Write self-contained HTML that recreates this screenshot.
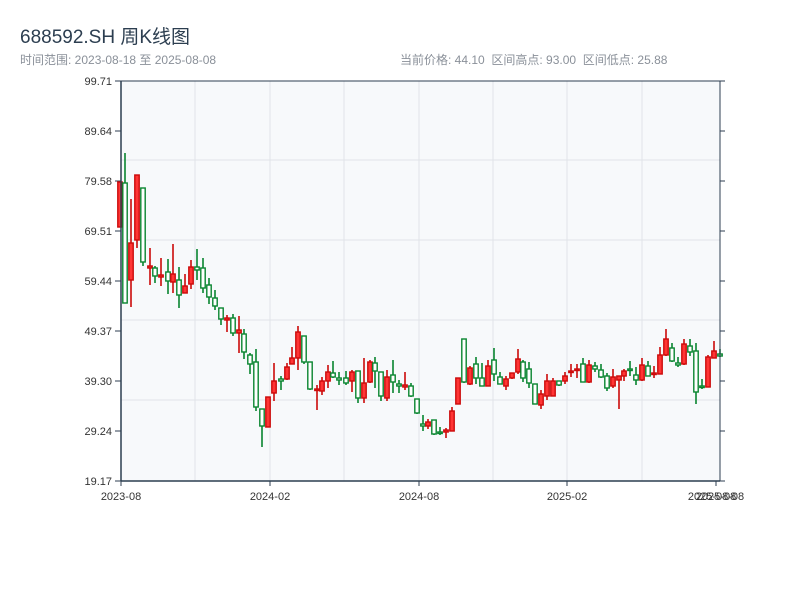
<!DOCTYPE html>
<html><head><meta charset="utf-8"><style>
body{margin:0;background:#fff;width:800px;height:600px;overflow:hidden;font-family:"Liberation Sans","Noto Sans CJK SC",sans-serif}
.t{position:absolute;left:20px;top:22px;font-size:19px;color:#2c3e50}
.s{position:absolute;top:51px;font-size:12px;color:#8a9099}
svg{position:absolute;left:0;top:0}
</style></head><body>
<div class="t">688592.SH 周K线图</div>
<div class="s" style="left:20px">时间范围: 2023-08-18 至 2025-08-08</div>
<div class="s" style="left:400px">当前价格: 44.10&nbsp;&nbsp;区间高点: 93.00&nbsp;&nbsp;区间低点: 25.88</div>
<svg id="c" width="800" height="600" xmlns="http://www.w3.org/2000/svg" font-family="Liberation Sans, sans-serif" font-size="11" fill="#333"></svg>
<script>
var s='';
s+='<rect x="121" y="81" width="599" height="400" fill="#f7f9fb"/>';
[195,270,344,419,493,567,642].forEach(function(x){s+='<line x1="'+x+'" y1="81" x2="'+x+'" y2="481" stroke="#e1e4e8"/>';});
[160,240,320,400].forEach(function(y){s+='<line x1="121" y1="'+y+'" x2="720" y2="'+y+'" stroke="#e1e4e8"/>';});
var L=['99.71','89.64','79.58','69.51','59.44','49.37','39.30','29.24','19.17'];
L.forEach(function(l,i){var y=81+i*50;s+='<line x1="115" y1="'+y+'" x2="121" y2="'+y+'" stroke="#2c3e50"/><line x1="720" y1="'+y+'" x2="725" y2="'+y+'" stroke="#2c3e50"/><text x="112" y="'+(y+4)+'" text-anchor="end">'+l+'</text>';});
[[121,'2023-08'],[270,'2024-02'],[419,'2024-08'],[567,'2025-02'],[716,'2025-08'],[716,'2025-08-08']].forEach(function(a){s+='<line x1="'+a[0]+'" y1="481" x2="'+a[0]+'" y2="486" stroke="#2c3e50"/><text x="'+a[0]+'" y="500" text-anchor="middle">'+a[1]+'</text>';});
var D=[[120,182,227,182,227,1],[125,183,303,153,303,0],[131,243,280,199,307,1],[137,175,240,175,248,1],[143,188,262,188,266,0],[150,266,268,248,285,1],[155,268,276,266,283,0],[161,275,277,258,286,1],[168,272,281,259,294,0],[173,274,282,244,293,1],[179,280,295,267,308,0],[185,286,293,274,293,1],[191,267,284,260,289,1],[197,267,270,249,280,0],[203,268,288,258,293,0],[209,285,297,278,304,0],[215,298,306,290,310,0],[221,308,319,308,325,0],[227,318,320,315,332,1],[233,318,333,314,336,0],[239,330,333,316,353,1],[244,334,352,329,359,0],[250,355,364,353,374,0],[256,362,407,349,411,0],[262,409,426,409,447,0],[268,397,427,397,427,1],[274,381,393,363,401,1],[281,379,381,376,390,0],[287,367,379,363,380,1],[292,358,364,347,364,1],[298,332,358,326,370,1],[304,336,362,336,364,0],[310,362,389,362,390,0],[317,389,390,385,410,1],[322,381,391,377,395,1],[328,372,381,365,388,1],[333,373,377,361,378,0],[339,378,380,372,385,0],[346,378,383,371,385,0],[352,372,381,370,392,1],[358,371,398,371,403,0],[364,383,398,358,403,1],[370,362,382,360,383,1],[375,363,371,357,388,0],[381,372,396,372,401,0],[387,377,398,370,401,1],[393,375,382,360,393,0],[399,384,386,380,393,0],[405,385,387,372,390,1],[411,386,396,383,397,0],[417,399,413,399,414,0],[423,424,426,415,431,0],[428,422,426,419,429,1],[434,420,434,420,435,0],[440,432,433,427,435,0],[446,430,432,428,438,1],[452,411,431,407,431,1],[458,378,404,378,404,1],[464,339,382,339,383,0],[470,368,384,366,385,1],[476,364,378,357,384,0],[482,378,386,363,386,0],[488,366,386,360,386,1],[494,360,374,348,381,0],[500,377,384,372,384,0],[506,379,386,376,390,1],[512,373,378,373,379,1],[518,359,372,349,374,1],[523,362,378,360,382,0],[529,369,383,362,388,0],[535,384,404,384,404,0],[541,394,405,390,409,1],[547,381,396,374,400,1],[553,381,396,378,396,1],[559,381,385,381,386,0],[565,376,381,372,384,1],[571,371,372,364,377,1],[577,369,370,364,378,1],[583,364,382,358,382,0],[589,365,382,360,383,1],[595,366,369,362,372,0],[601,370,377,364,378,0],[607,376,388,373,391,0],[613,377,386,369,388,1],[619,376,380,376,409,1],[624,371,376,369,381,1],[630,369,370,361,376,0],[636,375,380,367,385,0],[642,365,380,358,381,1],[648,366,376,361,376,0],[654,373,374,366,378,1],[660,355,374,347,374,1],[666,339,355,329,356,1],[672,348,361,343,362,0],[678,363,365,357,367,0],[684,344,364,339,365,1],[690,346,352,339,356,0],[696,351,392,343,404,0],[702,386,387,379,389,0],[708,357,387,355,387,1],[714,351,358,341,358,1],[720,354,356,349,357,0]];
D.forEach(function(d){var c=d[5]?'#cc0a0a':'#08852f',f=d[5]?'#ff3535':'#fff';
s+='<line x1="'+d[0]+'" y1="'+d[3]+'" x2="'+d[0]+'" y2="'+d[4]+'" stroke="'+c+'" stroke-width="1.6"/>';
s+='<rect x="'+(d[0]-2.2)+'" y="'+d[1]+'" width="4.4" height="'+Math.max(1.5,d[2]-d[1])+'" fill="'+f+'" stroke="'+c+'" stroke-width="1.4"/>';});
s+='<line x1="121" y1="81" x2="720" y2="81" stroke="#2c3e50"/><line x1="121" y1="81" x2="121" y2="481" stroke="#2c3e50" stroke-width="1.5"/><line x1="720" y1="81" x2="720" y2="481" stroke="#2c3e50"/><line x1="121" y1="481" x2="720" y2="481" stroke="#2c3e50" stroke-width="1.5"/>';
document.getElementById('c').innerHTML=s;
</script>
</body></html>
